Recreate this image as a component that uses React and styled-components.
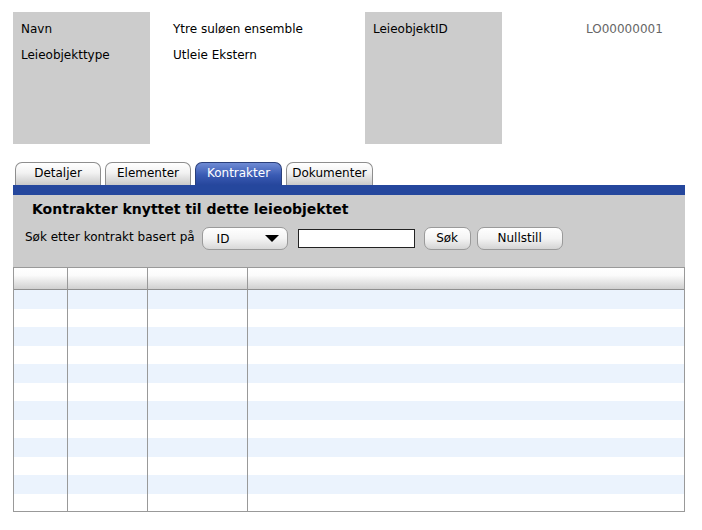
import React from "react";
import styled, { createGlobalStyle } from "styled-components";

const GlobalStyle = createGlobalStyle`
  body {
    margin: 0;
    background: #fff;
    font-family: "DejaVu Sans", "Liberation Sans", sans-serif;
    font-size: 12px;
    color: #000;
  }
`;

const Page = styled.div`
  width: 672px;
  padding: 12px 0 0 13px;
`;

const InfoRow = styled.div`
  display: flex;
  height: 132px;
`;

const LabelBox = styled.div`
  width: 137px;
  background: #cccccc;
  padding: 10px 0 0 8px;
  box-sizing: border-box;
`;

const ValueCol = styled.div`
  width: ${(props) => props.width}px;
  padding: 10px 0 0 ${(props) => props.indent}px;
  box-sizing: border-box;
  color: ${(props) => (props.muted ? "#666" : "#000")};
`;

const Line = styled.div`
  height: 26px;
  line-height: 15px;
`;

const TabBar = styled.div`
  display: flex;
  gap: 4px;
  margin-top: 18px;
  padding-left: 2px;
  height: 23px;
  align-items: flex-end;
`;

const Tab = styled.div`
  width: ${(props) => props.width}px;
  height: 23px;
  box-sizing: border-box;
  border: 1px solid ${(props) => (props.active ? "#2a3f7a" : "#8e8e8e")};
  border-bottom: none;
  border-radius: 7px 7px 0 0;
  background: ${(props) =>
    props.active
      ? "linear-gradient(#6f8bd4, #3a5bb4 55%, #26469c)"
      : "linear-gradient(#ffffff, #f2f2f2 45%, #c9c9c9)"};
  color: ${(props) => (props.active ? "#fff" : "#000")};
  text-align: center;
  line-height: 21px;
`;

const BlueBar = styled.div`
  height: 10px;
  background: #25479d;
`;

const Panel = styled.div`
  height: 72px;
  background: #cccccc;
  padding: 6px 0 0 12px;
  box-sizing: border-box;
`;

const Title = styled.div`
  font-weight: bold;
  font-size: 14px;
  padding-left: 7px;
  line-height: 17px;
`;

const SearchRow = styled.div`
  display: flex;
  align-items: center;
  margin-top: 9px;
  height: 23px;
`;

const SearchLabel = styled.span`
  margin-right: 7px;
  position: relative;
  top: -2px;
`;

const Select = styled.div`
  width: 86px;
  height: 23px;
  box-sizing: border-box;
  border: 1px solid #9a9a9a;
  border-radius: 7px;
  background: linear-gradient(#ffffff, #f4f4f4 50%, #d8d8d8);
  display: flex;
  align-items: center;
  justify-content: space-between;
  padding: 0 8px 0 14px;
`;

const Arrow = styled.span`
  width: 0;
  height: 0;
  border-left: 7px solid transparent;
  border-right: 7px solid transparent;
  border-top: 7px solid #000;
`;

const TextInput = styled.div`
  width: 117px;
  height: 19px;
  box-sizing: border-box;
  border: 1px solid #222;
  background: #fff;
  margin-left: 10px;
`;

const Button = styled.div`
  width: ${(props) => props.width}px;
  height: 23px;
  box-sizing: border-box;
  border: 1px solid #9a9a9a;
  border-radius: 7px;
  background: linear-gradient(#ffffff, #f4f4f4 50%, #d4d4d4);
  text-align: center;
  line-height: 20px;
  margin-left: ${(props) => props.gap}px;
`;

const Table = styled.div`
  border: 1px solid #999;
  border-top: none;
  height: 245px;
  box-sizing: border-box;
  overflow: hidden;
`;

const Grid = styled.div`
  display: grid;
  grid-template-columns: 53px 80px 100px 1fr;
`;

const HeadCell = styled.div`
  height: 23px;
  box-sizing: border-box;
  border-top: 1px solid #999;
  border-bottom: 1px solid #8f8f8f;
  border-left: ${(props) => (props.first ? "none" : "1px solid #999")};
  background: linear-gradient(#ffffff, #fbfbfb 35%, #d0d0d0);
`;

const Cell = styled.div`
  height: 18.5px;
  border-left: ${(props) => (props.first ? "none" : "1px solid #999")};
  background: ${(props) => (props.odd ? "#fff" : "#ebf3fd")};
`;

const rows = Array.from({ length: 12 });
const cols = [0, 1, 2, 3];

export default function App() {
  return (
    <Page>
      <GlobalStyle />
      <InfoRow>
        <LabelBox>
          <Line>Navn</Line>
          <Line>Leieobjekttype</Line>
        </LabelBox>
        <ValueCol width={215} indent={23}>
          <Line>Ytre suløen ensemble</Line>
          <Line>Utleie Ekstern</Line>
        </ValueCol>
        <LabelBox>
          <Line>LeieobjektID</Line>
        </LabelBox>
        <ValueCol width={183} indent={84} muted>
          <Line>LO00000001</Line>
        </ValueCol>
      </InfoRow>

      <TabBar>
        <Tab width={86}>Detaljer</Tab>
        <Tab width={86}>Elementer</Tab>
        <Tab width={87} active>Kontrakter</Tab>
        <Tab width={87}>Dokumenter</Tab>
      </TabBar>
      <BlueBar />
      <Panel>
        <Title>Kontrakter knyttet til dette leieobjektet</Title>
        <SearchRow>
          <SearchLabel>Søk etter kontrakt basert på</SearchLabel>
          <Select>
            <span>ID</span>
            <Arrow />
          </Select>
          <TextInput />
          <Button width={47} gap={9}>Søk</Button>
          <Button width={86} gap={6}>Nullstill</Button>
        </SearchRow>
      </Panel>

      <Table>
        <Grid>
          {cols.map((c) => (
            <HeadCell key={c} first={c === 0} />
          ))}
          {rows.map((_, r) =>
            cols.map((c) => <Cell key={`${r}-${c}`} first={c === 0} odd={r % 2 === 1} />)
          )}
        </Grid>
      </Table>
    </Page>
  );
}
